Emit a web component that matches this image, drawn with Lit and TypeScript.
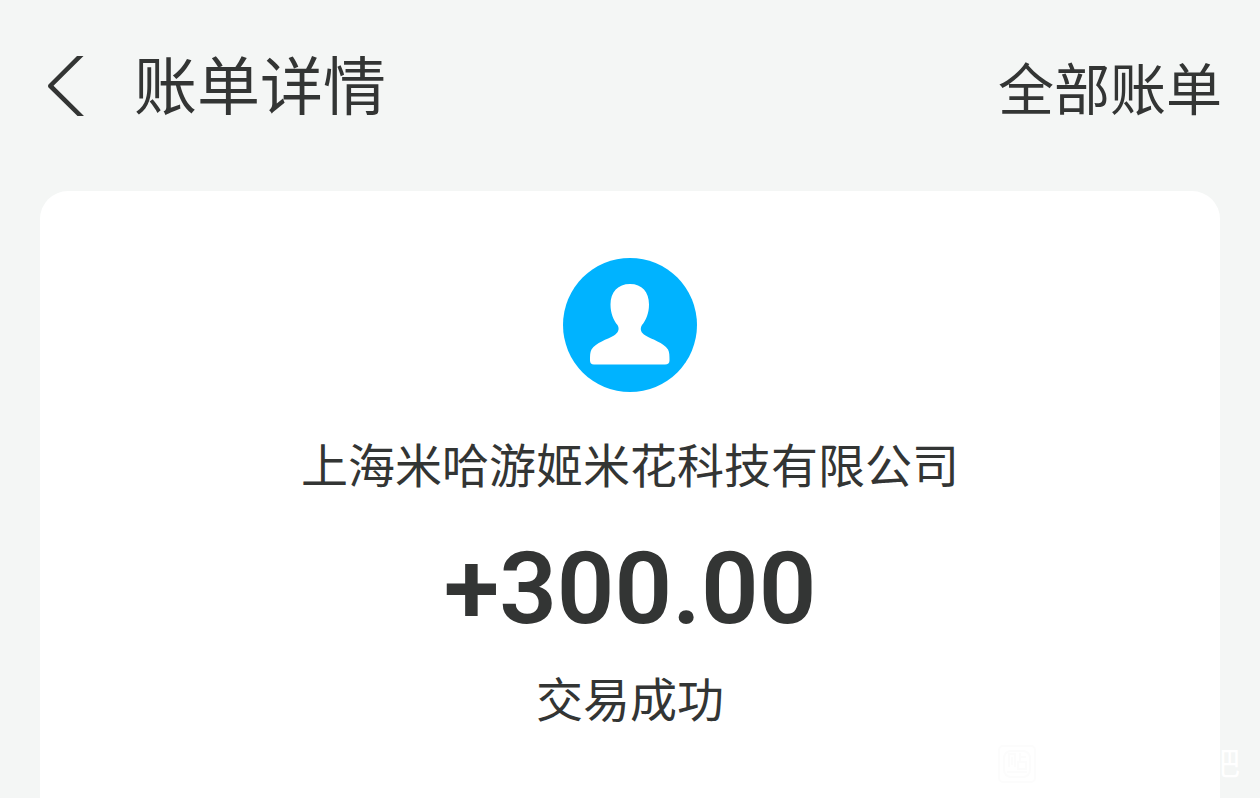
import { LitElement, html, css, svg } from "lit";
import { customElement, property } from "lit/decorators.js";

const backIcon = svg`
  <svg class="back-icon" viewBox="0 0 36 60" aria-hidden="true">
    <path d="M29 0H35.500L5.500 29.800L36 60H29.500L.5 31.500Q-.5 30 .5 28.500Z" fill="currentColor" />
  </svg>`;

const personIcon = svg`
  <svg class="avatar" viewBox="0 0 134 134" role="img" aria-label="头像">
    <circle cx="67" cy="67" r="67" fill="#00b3ff" />
    <path fill="#fff" d="M67 26C55 26 47.500 34 47.500 46.500C47.500 55 50.500 62.500 54.500 67C57 71 55 75 51 77.500C44 81.500 33 84.500 28.500 91.500C27 94 27 98 27 102.500Q27 106.500 31 106.500H102Q106.500 106.500 106.500 102.500C106.500 98 106.500 94 105 91.500C100.500 84.500 89 81.500 82.500 77.500C78 75 76.500 71 79 67C83 62.500 86 55 86 46.500C86 34 79 26 67 26Z" />
  </svg>`;

@customElement("bill-card")
export class BillCard extends LitElement {
  @property() payee = "";
  @property() amount = "";
  @property() status = "";

  static styles = css`
    :host {
      flex: 1;
      display: flex;
      flex-direction: column;
      align-items: center;
      padding: 67px 24px 0;
      border-radius: 28px 28px 0 0;
      background: #fff;
      text-align: center;
    }
    .avatar {
      display: block;
      width: 134px;
      height: 134px;
    }
    .line {
      margin: 0;
      font-size: 47px;
      line-height: 64px;
      font-weight: 400;
    }
    .payee {
      margin-top: 39px;
    }
    .amount {
      margin: 36px 0 18px;
      font-family: Roboto, "Liberation Sans", sans-serif;
      font-size: 101px;
      line-height: 116px;
      font-weight: 600;
    }
  `;

  render() {
    return html`
      ${personIcon}
      <h2 class="line payee">${this.payee}</h2>
      <p class="amount">${this.amount}</p>
      <p class="line">${this.status}</p>
    `;
  }
}

@customElement("app-root")
export class AppRoot extends LitElement {
  static styles = css`
    :host {
      position: relative;
      box-sizing: border-box;
      display: flex;
      flex-direction: column;
      min-height: 100vh;
      padding: 0 40px;
      background: #f4f6f5;
      color: #333534;
      font-family: "Noto Sans CJK SC", sans-serif;
    }
    header {
      display: flex;
      align-items: center;
      margin-right: -2px;
      padding: 40px 0 59px;
    }
    .back {
      display: flex;
      padding: 0 8px;
      border: 0;
      background: none;
      color: inherit;
    }
    .back-icon {
      width: 36px;
      height: 60px;
    }
    h1 {
      flex: 1;
      margin: 0 0 0 42px;
      padding-bottom: 8px;
      font-size: 63px;
      line-height: 84px;
      font-weight: 400;
    }
    .all {
      color: inherit;
      font-size: 56px;
      line-height: 84px;
      text-decoration: none;
    }
    .watermark {
      position: absolute;
      right: 20px;
      bottom: 15px;
      display: flex;
      align-items: flex-start;
      justify-content: space-between;
      width: 242px;
      color: #fff;
      font-size: 32px;
      line-height: 32px;
    }
    .mark {
      width: 38px;
      height: 38px;
    }
  `;

  render() {
    return html`
      <header>
        <button class="back" type="button" aria-label="返回">${backIcon}</button>
        <h1>账单详情</h1>
        <a class="all" href="#all">全部账单</a>
      </header>
      <bill-card payee="上海米哈游姬米花科技有限公司" amount="+300.00" status="交易成功"></bill-card>
      <div class="watermark">
        <svg class="mark" viewBox="0 0 38 38" fill="none" stroke="#fcfcfc" stroke-width="2" aria-hidden="true">
          <rect x="1" y="1" width="36" height="36" rx="4" />
          <rect x="6" y="6" width="26" height="26" rx="7" />
          <path d="M11 22V9h6v13M14 12v8M22 8v8M22 12h6M20 17h8v7h-8zM9 27h20" />
        </svg>
        <span>吧</span>
      </div>
    `;
  }
}
